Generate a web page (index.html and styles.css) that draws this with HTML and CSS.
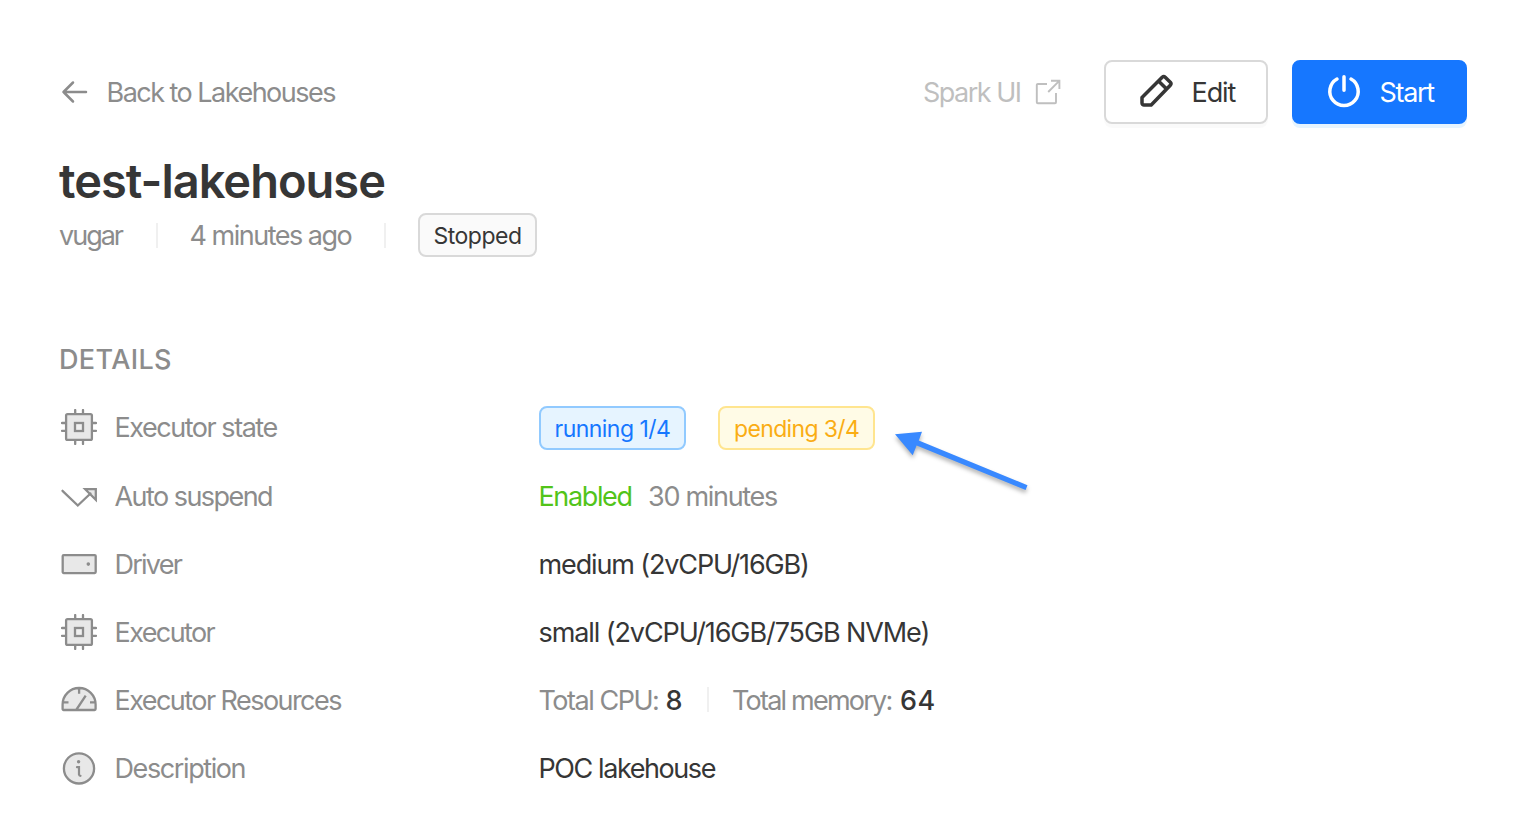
FILE: index.html
```html
<!DOCTYPE html>
<html lang="en">
<head>
<meta charset="utf-8">
<title>test-lakehouse</title>
<link rel="stylesheet" href="styles.css">
</head>
<body>
<svg class="defs" width="0" height="0" aria-hidden="true">
  <symbol id="chip" viewBox="0 0 36 36">
    <path d="M14.2 1v4M22 1v4M14.2 31v4M22 31v4M1 14h4M1 21.8h4M31 14h4M31 21.8h4" fill="none" stroke="#8c8c8c" stroke-width="2.3" stroke-linecap="round"/>
    <rect x="5.1" y="5.1" width="25.8" height="25.8" rx="1.5" fill="#e8e8e8" stroke="#8c8c8c" stroke-width="2.3"/>
    <rect x="14" y="14" width="8" height="8" fill="#f0f0f0" stroke="#8c8c8c" stroke-width="2.3"/>
  </symbol>
</svg>
<main class="page">
  <header class="topbar">
    <a class="back">
      <svg class="back-icon" viewBox="0 0 28 24"><path d="M25 12H2.5M12 2.5L2.5 12l9.5 9.5" fill="none" stroke="#8c8c8c" stroke-width="2.5" stroke-linecap="round" stroke-linejoin="round"/></svg>
      <span class="back-text">Back to Lakehouses</span>
    </a>
    <div class="actions">
      <a class="spark">
        <span class="spark-text">Spark UI</span>
        <svg class="external" viewBox="0 0 26 26"><path d="M12 5H2.8a1 1 0 0 0-1 1v17.2a1 1 0 0 0 1 1H20a1 1 0 0 0 1-1V14M16 1.8h8.4V10M24 2.2L13.2 13" fill="none" stroke="#bfbfbf" stroke-width="1.9"/></svg>
      </a>
      <button class="btn btn-edit">
        <svg class="btn-icon" viewBox="0 0 34 34"><path d="M2 23.5L22.2 3.2a2.2 2.2 0 0 1 3 0l5.1 5.1a2.2 2.2 0 0 1 0 3L11.2 31H4a2 2 0 0 1-2-2ZM18.5 7l8.3 8.3" fill="none" stroke="#363636" stroke-width="3.5" stroke-linejoin="round"/></svg>
        <span class="edit-text">Edit</span>
      </button>
      <button class="btn btn-start">
        <svg class="btn-icon" viewBox="0 0 34 34"><path d="M10 5A14.2 14.2 0 1 0 24 5M17 2.8v13.4" fill="none" stroke="#fff" stroke-width="3.5" stroke-linecap="round"/></svg>
        <span class="start-text">Start</span>
      </button>
    </div>
  </header>

  <h1 class="title">test-lakehouse</h1>
  <div class="meta">
    <span class="owner">vugar</span>
    <i class="divider"></i>
    <span class="age">4 minutes ago</span>
    <i class="divider"></i>
    <span class="tag tag-stopped">Stopped</span>
  </div>

  <h2 class="section">DETAILS</h2>
  <dl class="details">
    <div class="row row-first">
      <dt class="label"><svg class="icon"><use href="#chip"/></svg><span class="l-state">Executor state</span></dt>
      <dd class="value state-tags">
        <span class="tag tag-running">running 1/4</span>
        <span class="tag tag-pending">pending 3/4</span>
        <svg class="pointer" viewBox="0 0 144 72"><path d="M5 9.3L32 6.8l-3.2 8.6L137.5 60.2l-1.9 4.8L26.6 20.6l-3.9 9.7Z" fill="#3989ff"/></svg>
      </dd>
    </div>
    <div class="row">
      <dt class="label"><svg class="icon" viewBox="0 0 36 36"><path d="M24.2 11.2H34.8v10.6Z" fill="#e8e8e8"/><path d="M1.5 12.8L16.8 27.5l12.7-12M24.2 11.2H34.8v10.6Z" fill="none" stroke="#8c8c8c" stroke-width="2.3" stroke-linecap="round"/></svg><span class="l-auto">Auto suspend</span></dt>
      <dd class="value"><span class="enabled">Enabled</span><span class="minutes">30 minutes</span></dd>
    </div>
    <div class="row">
      <dt class="label"><svg class="icon" viewBox="0 0 36 36"><rect x="1.7" y="9.1" width="33" height="18" rx="1" fill="#e8e8e8" stroke="#8c8c8c" stroke-width="2.3"/><circle cx="27.3" cy="18.1" r="1.8" fill="#8c8c8c"/></svg><span class="l-driver">Driver</span></dt>
      <dd class="value"><span class="medium">medium (2vCPU/16GB)</span></dd>
    </div>
    <div class="row">
      <dt class="label"><svg class="icon"><use href="#chip"/></svg><span class="l-executor">Executor</span></dt>
      <dd class="value"><span class="small">small (2vCPU/16GB/75GB NVMe)</span></dd>
    </div>
    <div class="row">
      <dt class="label"><svg class="icon" viewBox="0 0 36 36"><path d="M1.6 27V22.5a16.5 16.5 0 0 1 33 0V27a1 1 0 0 1-1 1H2.6a1 1 0 0 1-1-1Z" fill="#e8e8e8"/><path d="M1.6 27V22.5a16.5 16.5 0 0 1 33 0V27a1 1 0 0 1-1 1H2.6a1 1 0 0 1-1-1ZM18.1 6.5v5.3M2 20.3h5.5M29 20.3h5.3M15.5 27.5l9.2-13.8" fill="none" stroke="#8c8c8c" stroke-width="2.3"/></svg><span class="l-resources">Executor Resources</span></dt>
      <dd class="value"><span class="cpu">Total CPU:</span><b class="num cpu-num">8</b><i class="divider divider-small"></i><span class="memory">Total memory:</span><b class="num mem-num">64</b></dd>
    </div>
    <div class="row">
      <dt class="label"><svg class="icon" viewBox="0 0 36 36"><circle cx="18" cy="18.4" r="15.1" fill="#e8e8e8" stroke="#8c8c8c" stroke-width="2.3"/><circle cx="17.6" cy="11.7" r="1.7" fill="#8c8c8c"/><path d="M16 17.2h2v7.4q.2 1.2 1.5 1.2" fill="none" stroke="#8c8c8c" stroke-width="2.2" stroke-linecap="round"/></svg><span class="l-description">Description</span></dt>
      <dd class="value"><span class="poc">POC lakehouse</span></dd>
    </div>
  </dl>
</main>
</body>
</html>
```

FILE: styles.css
```css
* { box-sizing: border-box; }
body {
  margin: 0;
  background: #fff;
  color: #363636;
  font: 400 27px/32px Inter, "Liberation Sans", sans-serif;
  white-space: nowrap;
}
svg { display: block; flex: none; overflow: visible; }
span, b { padding-top: 2px; }
.defs { position: absolute; }
.page { height: 838px; padding: 60px 55px 0 59px; overflow: hidden; }

.topbar { display: flex; justify-content: space-between; align-items: center; height: 64px; }
.back { display: flex; align-items: center; padding-left: 2px; gap: 17.5px; color: #8c8c8c; }
.back-icon { width: 28px; height: 24px; }
.back-text { letter-spacing: -1.52px; }
.actions { display: flex; align-items: center; }
.spark { display: flex; align-items: center; width: 137.5px; margin-right: 43.5px; justify-content: space-between; color: #bfbfbf; }
.spark-text { letter-spacing: -1.5px; }
.external { width: 26px; height: 26px; margin-top: -1px; }
.btn {
  display: flex;
  align-items: center;
  height: 64px;
  margin: 0;
  padding: 0 0 0 33.5px;
  border: 2px solid #d9d9d9;
  border-radius: 8px;
  background: #fff;
  color: #363636;
  font: inherit;
  box-shadow: 0 4px 0 rgba(0, 0, 0, .02);
}
.btn-icon { width: 34px; height: 34px; margin-top: -2px; }
.btn-edit { width: 164px; margin-right: 24px; gap: 18px; }
.edit-text { letter-spacing: -1.1px; }
.btn-start { width: 175px; padding-left: 33px; gap: 18.5px; border-color: #1677ff; background: #1677ff; color: #fff; box-shadow: 0 4px 0 rgba(5, 145, 255, .1); }
.start-text { letter-spacing: -1.3px; }

.title { margin: 29px 0 0; font-size: 47px; line-height: 56px; font-weight: 600; letter-spacing: -1px; }
.meta { display: flex; align-items: center; height: 44px; margin-top: 4px; color: #8c8c8c; }
.owner { width: 97px; letter-spacing: -2px; }
.age { width: 226px; padding-left: 31.5px; letter-spacing: -1.5px; }
.divider { flex: none; width: 2px; height: 25px; background: #f0f0f0; }
.tag {
  display: flex;
  align-items: center;
  height: 44px;
  padding: 2px 0 0 13.5px;
  border: 2px solid;
  border-radius: 8px;
  font-size: 23px;
}
.tag-stopped { width: 119px; margin-left: 32px; border-color: #d9d9d9; background: #fafafa; color: #363636; letter-spacing: -.5px; }
.tag-running { width: 147px; border-color: #91caff; background: #e6f4ff; color: #1677ff; letter-spacing: -.53px; }
.tag-pending { width: 157px; padding-left: 14px; margin-left: 32px; border-color: #ffe58f; background: #fffbe6; color: #faad14; letter-spacing: -.64px; }

.section { margin: 87px 0 0; font-size: 27px; line-height: 32px; font-weight: 500; letter-spacing: .37px; color: #8c8c8c; }
.details { margin: 17px 0 0; }
.row { display: grid; grid-template-columns: 479.5px 1fr; align-items: center; height: 68px; }
.row-first { height: 69px; }
.label { display: flex; align-items: center; gap: 17.5px; padding-left: 2px; color: #8c8c8c; }
.icon { width: 36px; height: 36px; }
.row-first .icon { margin-top: -1px; }
.row-first .l-state { padding-top: 0; }
.value { display: flex; align-items: center; margin: 0; }
.state-tags { position: relative; padding-left: .5px; padding-top: 1px; }
.pointer { position: absolute; left: 351.5px; top: 20px; width: 144px; height: 72px; filter: drop-shadow(0 3px 2px rgba(0, 0, 0, .3)); }
.l-state { letter-spacing: -1.46px; }
.l-auto { letter-spacing: -1.55px; }
.l-driver { letter-spacing: -1.75px; }
.l-executor { letter-spacing: -1.6px; }
.l-resources { letter-spacing: -1.55px; }
.l-description { letter-spacing: -1.4px; }
.enabled { width: 109.5px; letter-spacing: -1.37px; color: #52c41a; }
.minutes { letter-spacing: -1.3px; color: #8c8c8c; }
.medium { letter-spacing: -1.13px; }
.small { letter-spacing: -1.09px; }
.cpu { width: 127px; letter-spacing: -1.48px; color: #8c8c8c; }
.memory { width: 168px; letter-spacing: -1.78px; color: #8c8c8c; }
.num { font-weight: 450; }
.cpu-num { width: 41.5px; }
.mem-num { letter-spacing: .6px; }
.divider-small { margin: -2px 23px 0 0; }
.poc { letter-spacing: -1.42px; }
```
